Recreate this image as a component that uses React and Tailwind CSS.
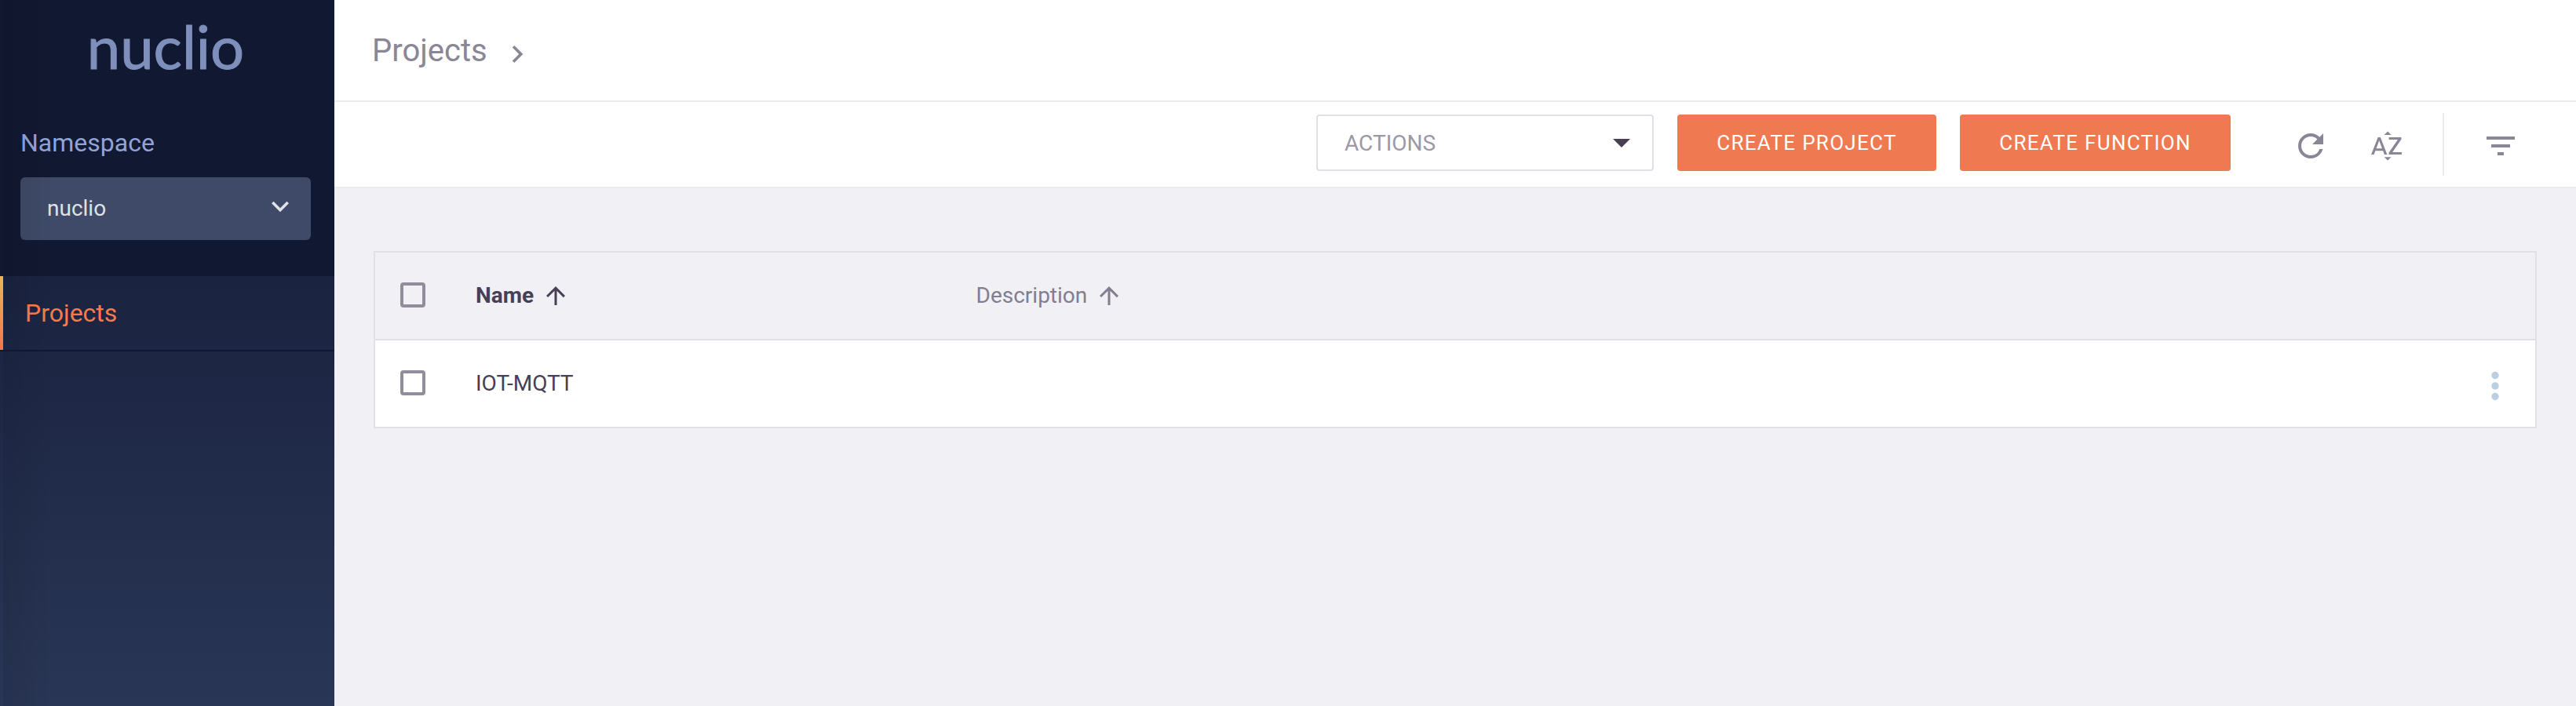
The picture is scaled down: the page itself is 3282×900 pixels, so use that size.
import React from "react";
import {
  MdArrowUpward,
  MdChevronRight,
  MdExpandMore,
  MdFilterList,
  MdRefresh,
  MdSortByAlpha,
} from "react-icons/md";

const projects = [{ name: "IOT-MQTT", description: "" }];

const rowGrid = "grid grid-cols-[128px_1fr_3fr_74px] items-center";

function Checkbox({ label }) {
  return (
    <input
      type="checkbox"
      aria-label={label}
      className="block size-8 appearance-none rounded-[4px] border-4 border-[#928d9c] bg-transparent checked:bg-[#928d9c]"
    />
  );
}

function Sidebar() {
  return (
    <aside className="relative flex w-[426px] shrink-0 flex-col bg-[#111831]">
      <div className="flex h-[352px] flex-col pl-[26px] pr-[30px]">
        <a
          href="#home"
          className="flex h-[118px] items-center justify-center font-['Lato',sans-serif] text-[76px] leading-none text-[#7f8fbb] [-webkit-text-stroke:1px_#7f8fbb]"
        >
          nuclio
        </a>
        <label
          htmlFor="namespace"
          className="mt-[42px] h-[66px] text-[32px] leading-[44px] text-[#92a4d6]"
        >
          Namespace
        </label>
        <div className="relative">
          <select
            id="namespace"
            defaultValue="nuclio"
            className="h-20 w-full appearance-none rounded-md bg-[#3f4a68] pl-[34px] pr-20 text-[28px] text-[#dfe1e8]"
          >
            <option>nuclio</option>
          </select>
          <MdExpandMore
            aria-hidden="true"
            className="pointer-events-none absolute right-[17px] top-[15px] size-11 text-[#e0e2e8]"
          />
        </div>
      </div>
      <nav className="flex-1 bg-linear-to-b from-[#1a2340] to-[#293655]">
        <div className="flex h-24 border-b-2 border-[#111831]">
          <div className="w-1 bg-linear-to-b from-[#ebb457] to-[#ef764e]" />
          <a
            href="#projects"
            className="flex flex-1 items-center pl-7 text-[32px] text-[#fd7a4c]"
          >
            Projects
          </a>
        </div>
      </nav>
      <div className="pointer-events-none absolute inset-y-0 left-1 w-16 bg-linear-to-r from-black/8 to-transparent" />
    </aside>
  );
}

function Toolbar() {
  return (
    <div className="flex h-[110px] items-center justify-end border-b-2 border-[#ebebed] bg-white pr-[72px]">
      <div className="relative mb-2 mt-1">
        <select
          aria-label="Actions"
          defaultValue="ACTIONS"
          className="block h-[72px] w-[430px] appearance-none rounded-[4px] border-2 border-[#e0e0e6] bg-white pl-[34px] pt-[2px] text-[28px] text-[#9c98a6]"
        >
          <option>ACTIONS</option>
        </select>
        <svg
          aria-hidden="true"
          viewBox="0 0 22 11"
          className="pointer-events-none absolute right-[30px] top-[31px] h-[11px] w-[22px] fill-[#483f56]"
        >
          <path d="M0 0h22L11 11z" />
        </svg>
      </div>
      <button
        type="button"
        className="mb-2 ml-[30px] mt-1 h-[72px] w-[330px] rounded-[4px] bg-[#ef7951] text-[26px] tracking-wider text-white"
      >
        CREATE PROJECT
      </button>
      <button
        type="button"
        className="mb-2 ml-[30px] mt-1 h-[72px] w-[345px] rounded-[4px] bg-[#ef7951] text-[26px] tracking-wider text-white"
      >
        CREATE FUNCTION
      </button>
      <div className="ml-[78px] flex items-center text-[#8b8696]">
        <button type="button" aria-label="Refresh" className="pt-1">
          <MdRefresh className="size-12" />
        </button>
        <button type="button" aria-label="Sort" className="ml-[50px] pt-1">
          <MdSortByAlpha className="size-[46px]" />
        </button>
        <div className="ml-12 h-20 w-[2px] bg-[#ebebed]" />
        <button type="button" aria-label="Filter" className="ml-12 pt-1">
          <MdFilterList className="size-12" />
        </button>
      </div>
    </div>
  );
}

function ProjectsTable() {
  return (
    <table className="block border-2 border-[#e0e0e6] text-left text-[28px]">
      <thead className="block">
        <tr className={"h-[110px] " + rowGrid}>
          <th className="pb-[2px] pl-8">
            <Checkbox label="Select all projects" />
          </th>
          <th className="font-bold text-[#483f56]">
            <button type="button" className="flex items-center gap-[10px]">
              Name
              <MdArrowUpward aria-hidden="true" className="size-9" />
            </button>
          </th>
          <th className="font-normal text-[#827d8f]">
            <button type="button" className="flex items-center gap-[10px]">
              Description
              <MdArrowUpward aria-hidden="true" className="size-9" />
            </button>
          </th>
          <th aria-label="Menu" />
        </tr>
      </thead>
      <tbody className="block">
        {projects.map((project) => (
          <tr
            key={project.name}
            className={
              "h-28 border-t-2 border-[#e0e0e6] bg-white text-[#483f56] " + rowGrid
            }
          >
            <td className="pb-[2px] pl-8">
              <Checkbox label={"Select " + project.name} />
            </td>
            <td>{project.name}</td>
            <td>{project.description}</td>
            <td className="flex pl-[14px] pt-[6px]">
              <button type="button" aria-label="Project menu">
                <svg viewBox="0 0 20 38" className="h-[38px] w-5 fill-[#bccfe1]">
                  <circle cx="9" cy="5.5" r="4.7" />
                  <circle cx="9" cy="19" r="4.7" />
                  <circle cx="9" cy="32.5" r="4.7" />
                </svg>
              </button>
            </td>
          </tr>
        ))}
      </tbody>
    </table>
  );
}

export default function App() {
  return (
    <div className="flex min-h-screen bg-[#f0f0f5] font-['Roboto',sans-serif]">
      <Sidebar />
      <div className="flex min-w-0 flex-1 flex-col">
        <header className="flex h-[130px] items-center border-b-2 border-[#ebebed] bg-white pl-12 pt-[2px] text-[#8b8696]">
          <a href="#projects" className="text-[40px]">
            Projects
          </a>
          <MdChevronRight aria-hidden="true" className="ml-4 mt-2 size-11" />
        </header>
        <Toolbar />
        <main className="px-[50px] py-20">
          <ProjectsTable />
        </main>
      </div>
    </div>
  );
}
